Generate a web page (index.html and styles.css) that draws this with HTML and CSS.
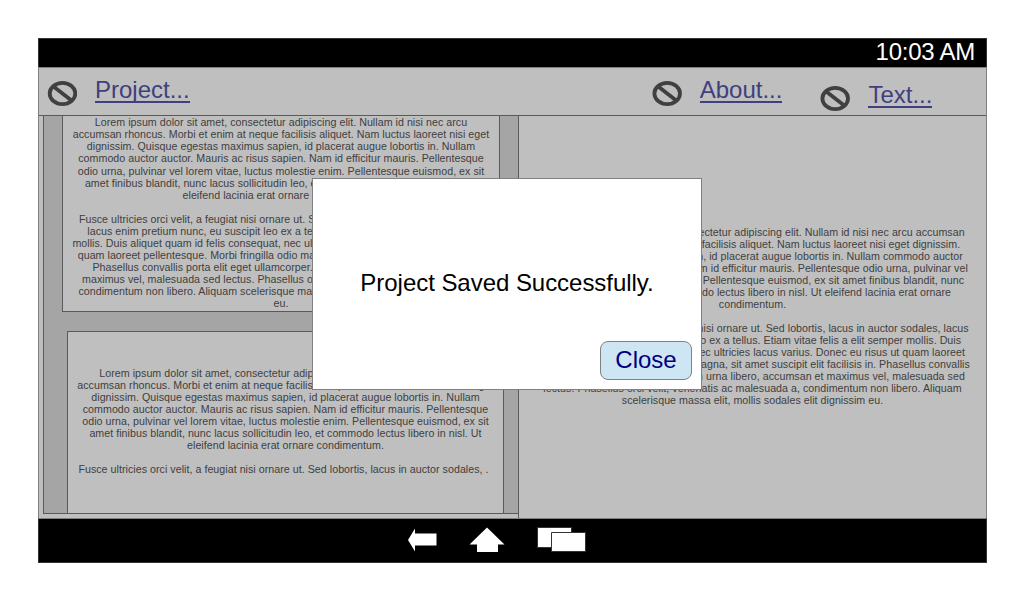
FILE: index.html
```
<!DOCTYPE html>
<html lang="en">
<head>
<meta charset="utf-8">
<title>Project</title>
<link rel="stylesheet" href="styles.css">
</head>
<body>
<div class="device">
  <div class="status">10:03 AM</div>
  <header class="toolbar">
    <div class="item project"><svg class="ban" viewBox="0 0 30 26"><ellipse cx="15.5" cy="12.5" rx="12.8" ry="10.6"/><path d="M6.500 5.500L24.500 19.500"/></svg><a class="link">Project...</a></div>
    <div class="item about"><svg class="ban" viewBox="0 0 30 26"><ellipse cx="15.2" cy="12.5" rx="12.8" ry="10.6"/><path d="M6.200 5.500L24.200 19.500"/></svg><a class="link">About...</a></div>
    <div class="item text"><svg class="ban" viewBox="0 0 30 26"><ellipse cx="15.2" cy="12.5" rx="12.8" ry="10.6"/><path d="M6.200 5.500L24.200 19.500"/></svg><a class="link">Text...</a></div>
  </header>
  <main class="content">
    <section class="pages">
      <article class="page first">
        <p>Lorem ipsum dolor sit amet, consectetur adipiscing elit. Nullam id nisi nec arcu<br>accumsan rhoncus. Morbi et enim at neque facilisis aliquet. Nam luctus laoreet nisi eget<br>dignissim. Quisque egestas maximus sapien, id placerat augue lobortis in. Nullam<br>commodo auctor auctor. Mauris ac risus sapien. Nam id efficitur mauris. Pellentesque</p>
        <p class="rest">odio urna, pulvinar vel lorem vitae, luctus molestie enim. Pellentesque euismod, ex sit<br>amet finibus blandit, nunc lacus sollicitudin leo, et commodo lectus libero in nisl. Ut<br>eleifend lacinia erat ornare condimentum.<br><br>Fusce ultricies orci velit, a feugiat nisi ornare ut. Sed lobortis, lacus in auctor sodales,<br>lacus enim pretium nunc, eu suscipit leo ex a tellus. Etiam vitae felis a elit semper<br>mollis. Duis aliquet quam id felis consequat, nec ultricies lacus varius. Donec eu risus ut<br>quam laoreet pellentesque. Morbi fringilla odio magna, sit amet suscipit elit facilisis in.<br>Phasellus convallis porta elit eget ullamcorper. Nullam urna libero, accumsan et<br>maximus vel, malesuada sed lectus. Phasellus orci velit, venenatis ac malesuada a,<br>condimentum non libero. Aliquam scelerisque massa elit, mollis sodales elit dignissim<br>eu.</p>
      </article>
      <article class="page second">
        <p>Lorem ipsum dolor sit amet, consectetur adipiscing elit. Nullam id nisi nec arcu<br>accumsan rhoncus. Morbi et enim at neque facilisis aliquet. Nam luctus laoreet nisi eget<br>dignissim. Quisque egestas maximus sapien, id placerat augue lobortis in. Nullam<br>commodo auctor auctor. Mauris ac risus sapien. Nam id efficitur mauris. Pellentesque<br>odio urna, pulvinar vel lorem vitae, luctus molestie enim. Pellentesque euismod, ex sit<br>amet finibus blandit, nunc lacus sollicitudin leo, et commodo lectus libero in nisl. Ut<br>eleifend lacinia erat ornare condimentum.</p>
        <p class="tail">Fusce ultricies orci velit, a feugiat nisi ornare ut. Sed lobortis, lacus in auctor sodales, .</p>
      </article>
    </section>
    <section class="preview">
      <p>Lorem ipsum dolor sit amet, consectetur adipiscing elit. Nullam id nisi nec arcu accumsan<br>rhoncus. Morbi et enim at neque facilisis aliquet. Nam luctus laoreet nisi eget dignissim.<br>Quisque egestas maximus sapien, id placerat augue lobortis in. Nullam commodo auctor<br>auctor. Mauris ac risus sapien. Nam id efficitur mauris. Pellentesque odio urna, pulvinar vel<br>lorem vitae, luctus molestie enim. Pellentesque euismod, ex sit amet finibus blandit, nunc<br>lacus sollicitudin leo, et commodo lectus libero in nisl. Ut eleifend lacinia erat ornare<br>condimentum.<br><br>Fusce ultricies orci velit, a feugiat nisi ornare ut. Sed lobortis, lacus in auctor sodales, lacus<br>enim pretium nunc, eu suscipit leo ex a tellus. Etiam vitae felis a elit semper mollis. Duis<br>aliquet quam id felis consequat, nec ultricies lacus varius. Donec eu risus ut quam laoreet<br>pellentesque. Morbi fringilla odio magna, sit amet suscipit elit facilisis in. Phasellus convallis<br>porta elit eget ullamcorper. Nullam urna libero, accumsan et maximus vel, malesuada sed<br>lectus. Phasellus orci velit, venenatis ac malesuada a, condimentum non libero. Aliquam<br>scelerisque massa elit, mollis sodales elit dignissim eu.</p>
    </section>
  </main>
  <nav class="navbar">
    <svg class="back" viewBox="0 0 30 26"><path d="M1 13L8 1.5V6.5H29.5V18.5H8V24.5Z"/></svg>
    <svg class="home" viewBox="0 0 36 26"><path d="M18 .5L35.5 17.5H29V25H8V17.5H.5Z"/></svg>
    <svg class="recent" viewBox="0 0 50 26"><path d="M.5 .5H34.5V20.5H.5Z"/><path d="M14.5 5.5H48.500V24.500H14.5Z"/></svg>
  </nav>
  <div class="dialog" role="dialog">
    <div class="message">Project Saved Successfully.</div>
    <button class="close">Close</button>
  </div>
</div>
</body>
</html>
```
FILE: styles.css
```
* { box-sizing: border-box; }
body { margin: 0; padding: 38px; background: #fff; font-family: "Liberation Sans", Arial, sans-serif; }
p { margin: 0; }
.device { position: relative; width: 949px; height: 525px; display: flex; flex-direction: column; background: #bfbfbf; border: 1px solid #808080; border-top: 0; border-bottom: 0; }
.status { height: 29px; margin: 0 -1px; padding-right: 11px; background: #000; border: 1px solid #333; border-bottom: 0; color: #fff; font-size: 24px; letter-spacing: -.25px; line-height: 26px; text-align: right; }
.toolbar { height: 49px; border-top: 1px solid #808080; border-bottom: 1px solid #5a5a5a; display: flex; padding-left: 8px; }
.item { display: flex; align-items: flex-start; padding-top: 8px; }
.about { margin-left: 462px; }
.text { margin-left: 38px; padding-top: 13px; }
.ban { width: 30px; height: 26px; margin: 5px 18px 0 0; fill: none; stroke: #404040; stroke-width: 3.8; }
.link { color: #404080; font-size: 24px; line-height: 28px; height: 27px; border-bottom: 2px solid #404080; }
.content { height: 402px; display: flex; }
.pages { display: grid; grid-template-rows: 196px 182px; row-gap: 19px; width: 475px; height: 398px; margin-left: 4px; background: #a5a5a5; border-left: 1px solid #5a5a5a; border-bottom: 1px solid #5a5a5a; }
.page { background: #bfbfbf; border: 1px solid #5a5a5a; }
.page, .preview { color: #404040; font-size: 10.67px; letter-spacing: .035px; line-height: 12px; text-align: center; white-space: nowrap; }
.page p { display: flow-root; }
.first { width: 438px; margin-left: 18px; border-top: 0; }
.first .rest { padding-top: 1px; }
.second { width: 437px; margin-left: 23px; padding-top: 35px; border-bottom: 0; }
.second .tail { margin: 12px 4px 0 0; }
.preview { width: 468px; padding-top: 110px; border-left: 1px solid #5a5a5a; }
.navbar { height: 45px; margin: 0 -1px; display: flex; background: #000; border: 1px solid #333; border-top-color: #808080; padding: 8px 0 0 368px; }
.navbar svg { height: 26px; fill: #fff; }
.back { width: 30px; }
.home { width: 36px; margin-left: 32px; }
.navbar .recent { width: 50px; margin-left: 32px; stroke: #333; }
.dialog { position: absolute; left: 273px; top: 140px; width: 390px; height: 212px; background: #fff; border: 1px solid #808080; display: flex; flex-direction: column; align-items: flex-end; padding: 90px 9px 0 0; }
.message { width: 380px; padding-left: 10px; text-align: center; font-size: 24px; letter-spacing: -.04px; line-height: 28px; color: #000; }
.close { width: 92px; height: 39px; margin-top: 44px; padding: 0 0 2px 0; background: #cee6f4; border: 1px solid #808080; border-radius: 8px; color: #000080; font: 24px/35px "Liberation Sans", Arial, sans-serif; }
```
